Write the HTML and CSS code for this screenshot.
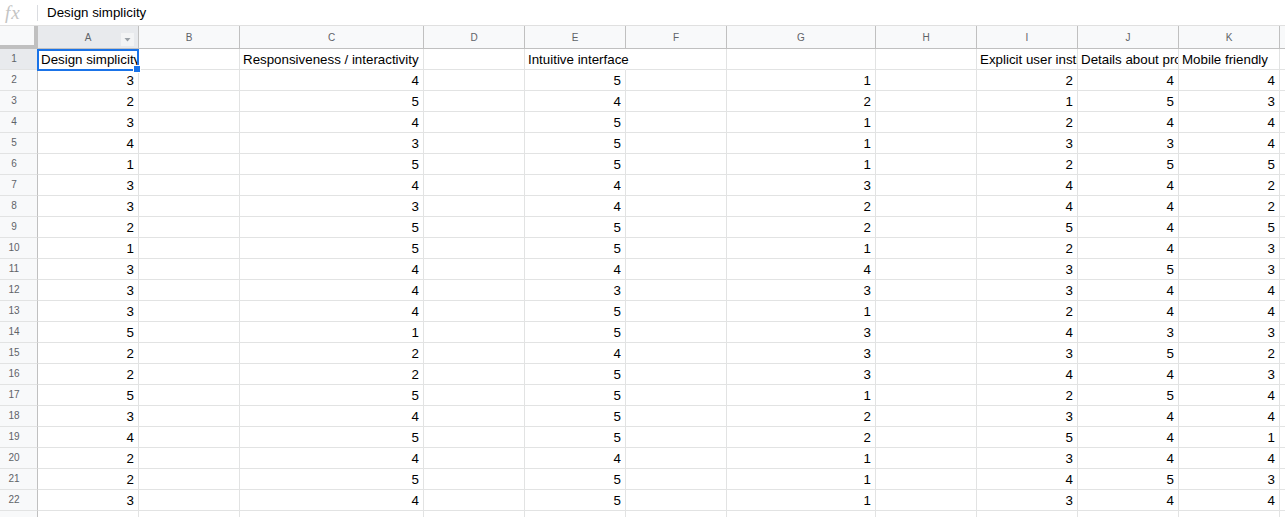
FILE: index.html
```html
<!DOCTYPE html>
<html>
<head>
<meta charset="utf-8">
<link rel="stylesheet" href="styles.css">
</head>
<body>
<div class="fbar">
  <div class="fx">fx</div>
  <div class="fsep"></div>
  <div class="ftext">Design simplicity</div>
</div>
<div class="sheet">
  <div class="corner"></div>
  <div class="ch sel">A<span class="filt"><svg width="13" height="13" viewBox="0 0 13 13"><path d="M3.5 5h6l-3 3.5z" fill="#9aa0a6"/></svg></span></div>
  <div class="ch">B</div><div class="ch">C</div><div class="ch">D</div><div class="ch">E</div><div class="ch">F</div><div class="ch">G</div><div class="ch">H</div><div class="ch">I</div><div class="ch">J</div><div class="ch">K</div><div class="ch"></div>

  <div class="rh sel">1</div><div class="c">Design simplicity</div><div class="c"></div><div class="c">Responsiveness / interactivity</div><div class="c"></div><div class="c over">Intuitive interface</div><div class="c"></div><div class="c"></div><div class="c"></div><div class="c">Explicit user instructions</div><div class="c">Details about product</div><div class="c">Mobile friendly</div><div class="c"></div>

  <div class="rh">2</div><div class="c n">3</div><div class="c"></div><div class="c n">4</div><div class="c"></div><div class="c n">5</div><div class="c"></div><div class="c n">1</div><div class="c"></div><div class="c n">2</div><div class="c n">4</div><div class="c n">4</div><div class="c"></div>
  <div class="rh">3</div><div class="c n">2</div><div class="c"></div><div class="c n">5</div><div class="c"></div><div class="c n">4</div><div class="c"></div><div class="c n">2</div><div class="c"></div><div class="c n">1</div><div class="c n">5</div><div class="c n">3</div><div class="c"></div>
  <div class="rh">4</div><div class="c n">3</div><div class="c"></div><div class="c n">4</div><div class="c"></div><div class="c n">5</div><div class="c"></div><div class="c n">1</div><div class="c"></div><div class="c n">2</div><div class="c n">4</div><div class="c n">4</div><div class="c"></div>
  <div class="rh">5</div><div class="c n">4</div><div class="c"></div><div class="c n">3</div><div class="c"></div><div class="c n">5</div><div class="c"></div><div class="c n">1</div><div class="c"></div><div class="c n">3</div><div class="c n">3</div><div class="c n">4</div><div class="c"></div>
  <div class="rh">6</div><div class="c n">1</div><div class="c"></div><div class="c n">5</div><div class="c"></div><div class="c n">5</div><div class="c"></div><div class="c n">1</div><div class="c"></div><div class="c n">2</div><div class="c n">5</div><div class="c n">5</div><div class="c"></div>
  <div class="rh">7</div><div class="c n">3</div><div class="c"></div><div class="c n">4</div><div class="c"></div><div class="c n">4</div><div class="c"></div><div class="c n">3</div><div class="c"></div><div class="c n">4</div><div class="c n">4</div><div class="c n">2</div><div class="c"></div>
  <div class="rh">8</div><div class="c n">3</div><div class="c"></div><div class="c n">3</div><div class="c"></div><div class="c n">4</div><div class="c"></div><div class="c n">2</div><div class="c"></div><div class="c n">4</div><div class="c n">4</div><div class="c n">2</div><div class="c"></div>
  <div class="rh">9</div><div class="c n">2</div><div class="c"></div><div class="c n">5</div><div class="c"></div><div class="c n">5</div><div class="c"></div><div class="c n">2</div><div class="c"></div><div class="c n">5</div><div class="c n">4</div><div class="c n">5</div><div class="c"></div>
  <div class="rh">10</div><div class="c n">1</div><div class="c"></div><div class="c n">5</div><div class="c"></div><div class="c n">5</div><div class="c"></div><div class="c n">1</div><div class="c"></div><div class="c n">2</div><div class="c n">4</div><div class="c n">3</div><div class="c"></div>
  <div class="rh">11</div><div class="c n">3</div><div class="c"></div><div class="c n">4</div><div class="c"></div><div class="c n">4</div><div class="c"></div><div class="c n">4</div><div class="c"></div><div class="c n">3</div><div class="c n">5</div><div class="c n">3</div><div class="c"></div>
  <div class="rh">12</div><div class="c n">3</div><div class="c"></div><div class="c n">4</div><div class="c"></div><div class="c n">3</div><div class="c"></div><div class="c n">3</div><div class="c"></div><div class="c n">3</div><div class="c n">4</div><div class="c n">4</div><div class="c"></div>
  <div class="rh">13</div><div class="c n">3</div><div class="c"></div><div class="c n">4</div><div class="c"></div><div class="c n">5</div><div class="c"></div><div class="c n">1</div><div class="c"></div><div class="c n">2</div><div class="c n">4</div><div class="c n">4</div><div class="c"></div>
  <div class="rh">14</div><div class="c n">5</div><div class="c"></div><div class="c n">1</div><div class="c"></div><div class="c n">5</div><div class="c"></div><div class="c n">3</div><div class="c"></div><div class="c n">4</div><div class="c n">3</div><div class="c n">3</div><div class="c"></div>
  <div class="rh">15</div><div class="c n">2</div><div class="c"></div><div class="c n">2</div><div class="c"></div><div class="c n">4</div><div class="c"></div><div class="c n">3</div><div class="c"></div><div class="c n">3</div><div class="c n">5</div><div class="c n">2</div><div class="c"></div>
  <div class="rh">16</div><div class="c n">2</div><div class="c"></div><div class="c n">2</div><div class="c"></div><div class="c n">5</div><div class="c"></div><div class="c n">3</div><div class="c"></div><div class="c n">4</div><div class="c n">4</div><div class="c n">3</div><div class="c"></div>
  <div class="rh">17</div><div class="c n">5</div><div class="c"></div><div class="c n">5</div><div class="c"></div><div class="c n">5</div><div class="c"></div><div class="c n">1</div><div class="c"></div><div class="c n">2</div><div class="c n">5</div><div class="c n">4</div><div class="c"></div>
  <div class="rh">18</div><div class="c n">3</div><div class="c"></div><div class="c n">4</div><div class="c"></div><div class="c n">5</div><div class="c"></div><div class="c n">2</div><div class="c"></div><div class="c n">3</div><div class="c n">4</div><div class="c n">4</div><div class="c"></div>
  <div class="rh">19</div><div class="c n">4</div><div class="c"></div><div class="c n">5</div><div class="c"></div><div class="c n">5</div><div class="c"></div><div class="c n">2</div><div class="c"></div><div class="c n">5</div><div class="c n">4</div><div class="c n">1</div><div class="c"></div>
  <div class="rh">20</div><div class="c n">2</div><div class="c"></div><div class="c n">4</div><div class="c"></div><div class="c n">4</div><div class="c"></div><div class="c n">1</div><div class="c"></div><div class="c n">3</div><div class="c n">4</div><div class="c n">4</div><div class="c"></div>
  <div class="rh">21</div><div class="c n">2</div><div class="c"></div><div class="c n">5</div><div class="c"></div><div class="c n">5</div><div class="c"></div><div class="c n">1</div><div class="c"></div><div class="c n">4</div><div class="c n">5</div><div class="c n">3</div><div class="c"></div>
  <div class="rh">22</div><div class="c n">3</div><div class="c"></div><div class="c n">4</div><div class="c"></div><div class="c n">5</div><div class="c"></div><div class="c n">1</div><div class="c"></div><div class="c n">3</div><div class="c n">4</div><div class="c n">4</div><div class="c"></div>
  <div class="rh"></div><div class="c"></div><div class="c"></div><div class="c"></div><div class="c"></div><div class="c"></div><div class="c"></div><div class="c"></div><div class="c"></div><div class="c"></div><div class="c"></div><div class="c"></div><div class="c"></div>

  <div class="selbox"><span class="handle"></span></div>
</div>
</body>
</html>
```

FILE: styles.css
```css
html, body {
  margin: 0;
  padding: 0;
  background: #fff;
  width: 1285px;
  height: 517px;
  overflow: hidden;
  font-family: "Liberation Sans", Arial, sans-serif;
}

.fbar {
  display: flex;
  align-items: center;
  height: 25px;
  border-bottom: 1px solid #e0e0e0;
  box-sizing: content-box;
}

.fx {
  width: 32px;
  padding-left: 5px;
  box-sizing: border-box;
  font-family: "Liberation Serif", serif;
  font-style: italic;
  font-size: 19px;
  color: #c4c4c4;
  line-height: 20px;
  letter-spacing: 1px;
}

.fsep {
  width: 1px;
  height: 16px;
  background: #dadce0;
  margin-left: 5px;
}

.ftext {
  padding-left: 9px;
  font-size: 13.33px;
  color: #000;
  line-height: 20px;
}

.sheet {
  position: relative;
  display: grid;
  grid-template-columns: 38px 101px 101px 184px 101px 101px 101px 149px 101px 101px 101px 101px 101px;
  grid-template-rows: 23px;
  grid-auto-rows: 21px;
  width: 1381px;
}

.corner {
  background: #f8f9fa;
  border-right: 4px solid #c0c0c0;
  border-bottom: 4px solid #c0c0c0;
  box-sizing: border-box;
}

.ch {
  position: relative;
  background: #f8f9fa;
  border-right: 1px solid #c0c0c0;
  border-bottom: 1px solid #c0c0c0;
  box-sizing: border-box;
  display: flex;
  align-items: center;
  justify-content: center;
  font-size: 10px;
  color: #5f6368;
}

.ch.sel, .rh.sel {
  background: #e8eaed;
}

.filt {
  position: absolute;
  right: 4px;
  top: 7px;
  width: 13px;
  height: 13px;
  background: #f3f4f5;
  display: flex;
}

.rh {
  background: #f8f9fa;
  border-right: 1px solid #c0c0c0;
  border-bottom: 1px solid #e2e3e3;
  box-sizing: border-box;
  font-size: 10px;
  color: #5f6368;
  text-align: center;
  padding-right: 9px;
  line-height: 20px;
}

.c {
  border-right: 1px solid #e2e3e3;
  border-bottom: 1px solid #e2e3e3;
  box-sizing: border-box;
  font-size: 13.33px;
  color: #000;
  line-height: 20px;
  padding: 1px 3px 0;
  white-space: nowrap;
  overflow: hidden;
}

.c.n {
  text-align: right;
  padding-right: 4px;
}

.c.over {
  overflow: visible;
  border-right-color: transparent;
  position: relative;
  z-index: 1;
}

.selbox {
  position: absolute;
  left: 37px;
  top: 23px;
  width: 102px;
  height: 22px;
  border: 2px solid #1a73e8;
  box-sizing: border-box;
  z-index: 2;
}

.handle {
  position: absolute;
  right: -4px;
  bottom: -4px;
  width: 6px;
  height: 6px;
  background: #1a73e8;
  border: 1px solid #fff;
}
```
